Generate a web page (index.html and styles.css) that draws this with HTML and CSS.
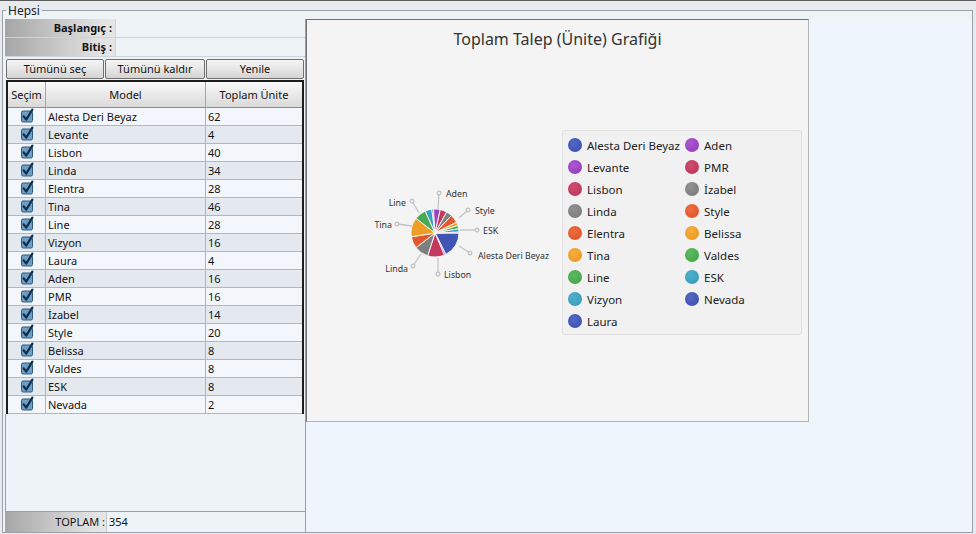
FILE: index.html
```html
<!DOCTYPE html>
<html lang="tr">
<head>
<meta charset="utf-8">
<title>Toplam Talep</title>
<link rel="stylesheet" href="styles.css">
</head>
<body>
<div class="window">
  <fieldset class="group">
    <legend>Hepsi</legend>
    <aside class="left">
      <div class="field"><div class="flabel">Başlangıç :</div><div class="fvalue"></div></div>
      <div class="field"><div class="flabel">Bitiş :</div><div class="fvalue"></div></div>
      <div class="buttons">
        <button class="btn btn-a">Tümünü seç</button>
        <button class="btn btn-b">Tümünü kaldır</button>
        <button class="btn btn-a">Yenile</button>
      </div>
      <div class="grid">
        <div class="row head"><div>Seçim</div><div>Model</div><div>Toplam Ünite</div></div>
        <div class="row"><div class="chk"><svg viewBox="0 0 14 15"><rect x="1.5" y="3" width="11" height="11" rx="1.5"/><path d="M3.6 8.3 L6.2 11.6 L12.4 1.6"/></svg></div><div>Alesta Deri Beyaz</div><div>62</div></div>
        <div class="row"><div class="chk"><svg viewBox="0 0 14 15"><rect x="1.5" y="3" width="11" height="11" rx="1.5"/><path d="M3.6 8.3 L6.2 11.6 L12.4 1.6"/></svg></div><div>Levante</div><div>4</div></div>
        <div class="row"><div class="chk"><svg viewBox="0 0 14 15"><rect x="1.5" y="3" width="11" height="11" rx="1.5"/><path d="M3.6 8.3 L6.2 11.6 L12.4 1.6"/></svg></div><div>Lisbon</div><div>40</div></div>
        <div class="row"><div class="chk"><svg viewBox="0 0 14 15"><rect x="1.5" y="3" width="11" height="11" rx="1.5"/><path d="M3.6 8.3 L6.2 11.6 L12.4 1.6"/></svg></div><div>Linda</div><div>34</div></div>
        <div class="row"><div class="chk"><svg viewBox="0 0 14 15"><rect x="1.5" y="3" width="11" height="11" rx="1.5"/><path d="M3.6 8.3 L6.2 11.6 L12.4 1.6"/></svg></div><div>Elentra</div><div>28</div></div>
        <div class="row"><div class="chk"><svg viewBox="0 0 14 15"><rect x="1.5" y="3" width="11" height="11" rx="1.5"/><path d="M3.6 8.3 L6.2 11.6 L12.4 1.6"/></svg></div><div>Tina</div><div>46</div></div>
        <div class="row"><div class="chk"><svg viewBox="0 0 14 15"><rect x="1.5" y="3" width="11" height="11" rx="1.5"/><path d="M3.6 8.3 L6.2 11.6 L12.4 1.6"/></svg></div><div>Line</div><div>28</div></div>
        <div class="row"><div class="chk"><svg viewBox="0 0 14 15"><rect x="1.5" y="3" width="11" height="11" rx="1.5"/><path d="M3.6 8.3 L6.2 11.6 L12.4 1.6"/></svg></div><div>Vizyon</div><div>16</div></div>
        <div class="row"><div class="chk"><svg viewBox="0 0 14 15"><rect x="1.5" y="3" width="11" height="11" rx="1.5"/><path d="M3.6 8.3 L6.2 11.6 L12.4 1.6"/></svg></div><div>Laura</div><div>4</div></div>
        <div class="row"><div class="chk"><svg viewBox="0 0 14 15"><rect x="1.5" y="3" width="11" height="11" rx="1.5"/><path d="M3.6 8.3 L6.2 11.6 L12.4 1.6"/></svg></div><div>Aden</div><div>16</div></div>
        <div class="row"><div class="chk"><svg viewBox="0 0 14 15"><rect x="1.5" y="3" width="11" height="11" rx="1.5"/><path d="M3.6 8.3 L6.2 11.6 L12.4 1.6"/></svg></div><div>PMR</div><div>16</div></div>
        <div class="row"><div class="chk"><svg viewBox="0 0 14 15"><rect x="1.5" y="3" width="11" height="11" rx="1.5"/><path d="M3.6 8.3 L6.2 11.6 L12.4 1.6"/></svg></div><div>İzabel</div><div>14</div></div>
        <div class="row"><div class="chk"><svg viewBox="0 0 14 15"><rect x="1.5" y="3" width="11" height="11" rx="1.5"/><path d="M3.6 8.3 L6.2 11.6 L12.4 1.6"/></svg></div><div>Style</div><div>20</div></div>
        <div class="row"><div class="chk"><svg viewBox="0 0 14 15"><rect x="1.5" y="3" width="11" height="11" rx="1.5"/><path d="M3.6 8.3 L6.2 11.6 L12.4 1.6"/></svg></div><div>Belissa</div><div>8</div></div>
        <div class="row"><div class="chk"><svg viewBox="0 0 14 15"><rect x="1.5" y="3" width="11" height="11" rx="1.5"/><path d="M3.6 8.3 L6.2 11.6 L12.4 1.6"/></svg></div><div>Valdes</div><div>8</div></div>
        <div class="row"><div class="chk"><svg viewBox="0 0 14 15"><rect x="1.5" y="3" width="11" height="11" rx="1.5"/><path d="M3.6 8.3 L6.2 11.6 L12.4 1.6"/></svg></div><div>ESK</div><div>8</div></div>
        <div class="row"><div class="chk"><svg viewBox="0 0 14 15"><rect x="1.5" y="3" width="11" height="11" rx="1.5"/><path d="M3.6 8.3 L6.2 11.6 L12.4 1.6"/></svg></div><div>Nevada</div><div>2</div></div>
      </div>
      <div class="spacer"></div>
      <div class="total"><div class="tlabel">TOPLAM :</div><div class="tvalue">354</div></div>
    </aside>
    <main class="right">
      <section class="chart">
        <h1 class="title">Toplam Talep (Ünite) Grafiği</h1>
        <div class="chart-body">
          <svg class="pie" viewBox="307 167 255 130" width="255" height="130">
            <g class="slices">
              <path class="f-blue" d="M435 232 L459 232 A24 24 0 0 1 445.88 253.39 Z"/>
              <path class="f-purple" d="M435 232 L445.88 253.39 A24 24 0 0 1 444.33 254.11 Z"/>
              <path class="f-crimson" d="M435 232 L444.33 254.11 A24 24 0 0 1 427.66 254.85 Z"/>
              <path class="f-gray" d="M435 232 L427.66 254.85 A24 24 0 0 1 415.98 246.65 Z"/>
              <path class="f-red" d="M435 232 L415.98 246.65 A24 24 0 0 1 411.30 235.82 Z"/>
              <path class="f-orange" d="M435 232 L411.30 235.82 A24 24 0 0 1 415.99 217.35 Z"/>
              <path class="f-green" d="M435 232 L415.99 217.35 A24 24 0 0 1 425.28 210.06 Z"/>
              <path class="f-teal" d="M435 232 L425.28 210.06 A24 24 0 0 1 431.81 208.21 Z"/>
              <path class="f-blue" d="M435 232 L431.81 208.21 A24 24 0 0 1 433.51 208.05 Z"/>
              <path class="f-purple" d="M435 232 L433.51 208.05 A24 24 0 0 1 440.28 208.59 Z"/>
              <path class="f-crimson" d="M435 232 L440.28 208.59 A24 24 0 0 1 446.63 211.00 Z"/>
              <path class="f-gray" d="M435 232 L446.63 211.00 A24 24 0 0 1 451.44 214.51 Z"/>
              <path class="f-red" d="M435 232 L451.44 214.51 A24 24 0 0 1 456.49 221.31 Z"/>
              <path class="f-orange" d="M435 232 L456.49 221.31 A24 24 0 0 1 457.79 224.46 Z"/>
              <path class="f-green" d="M435 232 L457.79 224.46 A24 24 0 0 1 458.62 227.76 Z"/>
              <path class="f-teal" d="M435 232 L458.62 227.76 A24 24 0 0 1 458.99 231.15 Z"/>
              <path class="f-blue" d="M435 232 L458.99 231.15 A24 24 0 0 1 459 232 Z"/>
            </g>
            <g class="leaders">
              <path d="M439 192 L438 208"/>
              <path d="M468 209 L459 217"/>
              <path d="M477 229 L460 229"/>
              <path d="M470 252 L459 245"/>
              <path d="M438 273 L438 257"/>
              <path d="M413 265 L421 253"/>
              <path d="M397 223 L412 225"/>
              <path d="M412 200 L419 212"/>
              <circle cx="439" cy="192" r="2"/>
              <circle cx="468" cy="209" r="2"/>
              <circle cx="477" cy="229" r="2"/>
              <circle cx="470" cy="252" r="2"/>
              <circle cx="438" cy="273" r="2"/>
              <circle cx="413" cy="265" r="2"/>
              <circle cx="397" cy="223" r="2"/>
              <circle cx="412" cy="200" r="2"/>
            </g>
            <g class="labels">
              <text x="446" y="196">Aden</text>
              <text x="475" y="213">Style</text>
              <text x="483" y="233">ESK</text>
              <text x="478" y="258">Alesta Deri Beyaz</text>
              <text x="444" y="277">Lisbon</text>
              <text x="408" y="271" text-anchor="end">Linda</text>
              <text x="392" y="227" text-anchor="end">Tina</text>
              <text x="406" y="205" text-anchor="end">Line</text>
            </g>
          </svg>
          <ul class="legend">
            <li><span class="dot d-blue"></span>Alesta Deri Beyaz</li>
            <li><span class="dot d-purple"></span>Levante</li>
            <li><span class="dot d-crimson"></span>Lisbon</li>
            <li><span class="dot d-gray"></span>Linda</li>
            <li><span class="dot d-red"></span>Elentra</li>
            <li><span class="dot d-orange"></span>Tina</li>
            <li><span class="dot d-green"></span>Line</li>
            <li><span class="dot d-teal"></span>Vizyon</li>
            <li><span class="dot d-blue"></span>Laura</li>
            <li><span class="dot d-purple"></span>Aden</li>
            <li><span class="dot d-crimson"></span>PMR</li>
            <li><span class="dot d-gray"></span>İzabel</li>
            <li><span class="dot d-red"></span>Style</li>
            <li><span class="dot d-orange"></span>Belissa</li>
            <li><span class="dot d-green"></span>Valdes</li>
            <li><span class="dot d-teal"></span>ESK</li>
            <li><span class="dot d-blue"></span>Nevada</li>
          </ul>
        </div>
      </section>
    </main>
  </fieldset>
</div>
</body>
</html>
```

FILE: styles.css
```css
html, body {
  margin: 0;
  padding: 0;
}
body {
  font-family: "Noto Sans", "Open Sans", sans-serif;
  font-size: 11px;
  color: #141414;
  background: #e7ebf0;
}
.window {
  width: 976px;
  height: 534px;
  box-sizing: border-box;
  border-top: 1px solid #5c5c5c;
  padding: 1px 3px 1px 2px;
  display: flex;
  flex-direction: column;
  background: #e7ebf0;
}
.group {
  flex: 1;
  min-height: 0;
  margin: 0;
  padding: 0 0 0 2px;
  border: 1px solid #9aa1a9;
  display: flex;
  background: #eef3f8;
}
.group > legend {
  margin-left: 1px;
  padding: 0 2px;
  font-size: 12px;
  line-height: 17px;
  color: #222;
}
.left {
  width: 301px;
  flex: none;
  display: flex;
  flex-direction: column;
  box-sizing: border-box;
  border-right: 1px solid #9aa0a6;
}
.field {
  display: flex;
  height: 19px;
  box-sizing: border-box;
  border-bottom: 1px solid #cfd4da;
}
.flabel {
  width: 110px;
  box-sizing: border-box;
  background: linear-gradient(to right, #a6a6a6, #e2e2e2 85%, #e6e6e6);
  font-weight: bold;
  text-align: right;
  padding-right: 3px;
  line-height: 18px;
}
.fvalue {
  flex: 1;
  background: #eef3f8;
  border-left: 1px solid #cfd4da;
}
.buttons {
  display: flex;
  gap: 1px;
  margin-top: 2px;
  padding-left: 1px;
  height: 20px;
}
.btn {
  font: inherit;
  font-size: 11px;
  color: #141414;
  padding: 0;
  border: 1px solid #6f6f6f;
  border-radius: 2px;
  background: linear-gradient(#f5f5f5, #e6e6e6 50%, #d4d4d4);
  line-height: 16px;
}
.btn-a { width: 98px; }
.btn-b { width: 100px; }
.grid {
  margin-top: 1px;
  margin-left: 1px;
  width: 298px;
  box-sizing: border-box;
  border: 2px solid #1d1d1d;
  border-bottom: none;
}
.row {
  display: grid;
  grid-template-columns: 38px 160px 96px;
  height: 18px;
  box-sizing: border-box;
  border-bottom: 1px solid #b2b7bd;
  background: #f3f7fb;
}
.row:nth-child(odd) {
  background: #e4e9ef;
}
.row > div {
  box-sizing: border-box;
  border-right: 1px solid #b2b7bd;
  padding-left: 2px;
  line-height: 17px;
  white-space: nowrap;
  overflow: hidden;
}
.row > div:last-child {
  border-right: none;
}
.row.head {
  height: 26px;
  background: linear-gradient(#fafafa, #e9e9e9 50%, #d9d9d9);
  border-bottom: 1px solid #8c8c8c;
}
.row.head > div {
  padding: 0;
  text-align: center;
  line-height: 26px;
  border-right-color: #a6a6a6;
}
.row > .chk {
  padding: 0;
  display: flex;
  justify-content: center;
  align-items: center;
}
.chk svg {
  width: 14px;
  height: 15px;
  margin-top: -2px;
}
.chk rect {
  fill: #6e9fc6;
  stroke: #2d5a80;
  stroke-width: 1;
}
.chk path {
  fill: none;
  stroke: #112f4b;
  stroke-width: 2.2;
  stroke-linecap: round;
  stroke-linejoin: round;
}
.spacer {
  flex: 1;
  background: #eef3f8;
  border-left: 1px solid #9aa0a6;
  border-bottom: 1px solid #9aa0a6;
}
.total {
  display: flex;
  height: 20px;
}
.tlabel {
  width: 102px;
  box-sizing: border-box;
  background: linear-gradient(to right, #a6a6a6, #e2e2e2 85%, #e6e6e6);
  text-align: right;
  padding-right: 1px;
  line-height: 19px;
  border-right: 1px solid #c3c8ce;
}
.tvalue {
  flex: 1;
  padding-left: 2px;
  line-height: 19px;
  background: #eef3f8;
}
.right {
  flex: 1;
  background: #eef5fc;
}
.chart {
  width: 503px;
  height: 403px;
  box-sizing: border-box;
  border: 1px solid;
  border-color: #707070 #b4b4b4 #b4b4b4 #707070;
  background: #f4f4f4;
  display: flex;
  flex-direction: column;
}
.title {
  margin: 9px 0 0;
  font-size: 16px;
  font-weight: normal;
  line-height: 20px;
  text-align: center;
  color: #333;
}
.chart-body {
  flex: 1;
  display: flex;
  align-items: center;
  padding-bottom: 5px;
}
.pie {
  flex: none;
  display: block;
}
.slices path {
  stroke: #f4f4f4;
  stroke-width: 1;
  stroke-linejoin: round;
}
.leaders path {
  stroke: #c4c4c4;
  stroke-width: 1.3;
  fill: none;
}
.leaders circle {
  fill: #f0f0f0;
  stroke: #b5b5b5;
  stroke-width: 1;
}
.labels text {
  font-family: "Noto Sans", "Open Sans", sans-serif;
  font-size: 8.8px;
  fill: #333;
}
.legend {
  list-style: none;
  margin: 0;
  padding: 3px 0 2px 5px;
  width: 240px;
  height: 205px;
  box-sizing: border-box;
  background: #f1f1f1;
  border: 1px solid #e0e0e0;
  border-radius: 3px;
  display: grid;
  grid-template-rows: repeat(9, 22px);
  grid-template-columns: 117px 1fr;
  grid-auto-flow: column;
  color: #222;
  font-size: 11.5px;
}
.legend li {
  display: flex;
  align-items: center;
  gap: 5px;
  white-space: nowrap;
}
.dot {
  width: 14px;
  height: 14px;
  border-radius: 50%;
  flex: none;
}
.f-blue { fill: #4054b6; }
.f-purple { fill: #9b41c3; }
.f-crimson { fill: #c4385d; }
.f-gray { fill: #7f7f7f; }
.f-red { fill: #e3592c; }
.f-orange { fill: #ee9e26; }
.f-green { fill: #4aaa4f; }
.f-teal { fill: #3aa0bf; }
.d-blue { background: radial-gradient(circle at 40% 35%, #5467c4, #3a4cad); }
.d-purple { background: radial-gradient(circle at 40% 35%, #ad56d2, #9139b9); }
.d-crimson { background: radial-gradient(circle at 40% 35%, #d04c6f, #b93255); }
.d-gray { background: radial-gradient(circle at 40% 35%, #929292, #767676); }
.d-red { background: radial-gradient(circle at 40% 35%, #ee6c40, #db5226); }
.d-orange { background: radial-gradient(circle at 40% 35%, #f6ae3e, #e8951e); }
.d-green { background: radial-gradient(circle at 40% 35%, #5cba60, #42a047); }
.d-teal { background: radial-gradient(circle at 40% 35%, #4fb0cc, #3296b5); }
```
